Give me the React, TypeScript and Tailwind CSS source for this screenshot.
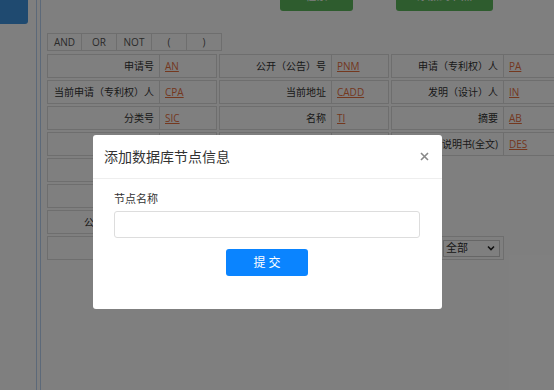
import React from 'react';

// 检索表单背后的页面 + 添加节点弹窗
type Pair = { label: string; code: string };

const rows: Pair[][] = [
  [
    { label: '申请号', code: 'AN' },
    { label: '公开（公告）号', code: 'PNM' },
    { label: '申请（专利权）人', code: 'PA' },
  ],
  [
    { label: '当前申请（专利权）人', code: 'CPA' },
    { label: '当前地址', code: 'CADD' },
    { label: '发明（设计）人', code: 'IN' },
  ],
  [
    { label: '分类号', code: 'SIC' },
    { label: '名称', code: 'TI' },
    { label: '摘要', code: 'AB' },
  ],
  [
    { label: '主分类号', code: 'PIC' },
    { label: '权利要求', code: 'CL' },
    { label: '说明书(全文)', code: 'DES' },
  ],
];

const dateRows = ['申请日', '优先权日', '公开（公告）日'];

const ops = ['AND', 'OR', 'NOT', '(', ')'];

const font = { fontFamily: '"Open Sans", "Noto Sans CJK SC", sans-serif' };

const PairCell: React.FC<{ pair: Pair }> = ({ pair }) => (
  <div className="flex">
    <div className="w-[113px] h-[24px] border border-[#dddddd] flex items-center justify-end pr-[5px] text-[10px] text-[#333]">
      {pair.label}
    </div>
    <div className="w-[57px] h-[24px] border border-l-0 border-[#dddddd] flex items-center pl-[5px] text-[10px]">
      <span className="text-[#e8703e] underline">{pair.code}</span>
    </div>
  </div>
);

const App: React.FC = () => {
  return (
    <div className="relative w-[554px] h-[390px] overflow-hidden bg-white" style={font}>
      <div className="flex h-full">
        {/* 左侧栏 */}
        <div className="w-[36px] shrink-0">
          <div className="w-[28px] h-[24px] bg-[#3e94e0] rounded-br-[3px]" />
        </div>
        <div className="w-[1px] bg-[#b8d2f2] shrink-0" />
        <div className="w-[3px] shrink-0" />
        <div className="w-[1px] bg-[#b8d2f2] shrink-0" />

        {/* 内容区 */}
        <div className="pl-[6px] w-[700px] shrink-0">
          <div className="flex h-[11px] pl-[233px] gap-[43px]">
            <div className="w-[73px] h-[30px] -mt-[19px] rounded-[3px] bg-[#5cb85c] text-white text-[11px] flex items-center justify-center">
              检索
            </div>
            <div className="w-[97px] h-[30px] -mt-[19px] rounded-[3px] bg-[#5cb85c] text-white text-[11px] flex items-center justify-center">
              添加到节点
            </div>
          </div>

          <div className="flex mt-[22px]">
            {ops.map((op, i) => (
              <div
                key={op}
                className={`w-[35px] h-[18px] border border-[#dddddd] ${i > 0 ? 'border-l-0' : ''} flex items-center justify-center text-[10px] text-[#555]`}
              >
                {op}
              </div>
            ))}
          </div>

          <div className="mt-[3px] flex flex-col gap-[2px]">
            {rows.map((r, i) => (
              <div key={i} className="flex gap-[2px]">
                {r.map((p) => (
                  <PairCell key={p.code} pair={p} />
                ))}
              </div>
            ))}
            {dateRows.map((label) => (
              <div key={label} className="flex">
                <div className="w-[113px] h-[24px] border border-[#dddddd] flex items-center justify-end pr-[5px] text-[10px] text-[#333]">
                  {label}
                </div>
                <div className="w-[270px] h-[24px] border border-l-0 border-[#dddddd]" />
              </div>
            ))}
            <div className="flex">
              <div className="w-[113px] h-[24px] border border-[#dddddd] flex items-center justify-end pr-[5px] text-[10px] text-[#333]">
                法律状态
              </div>
              <div className="w-[281px] h-[24px] border border-l-0 border-[#dddddd]" />
              <div className="w-[63px] h-[24px] border border-l-0 border-[#dddddd] flex items-center pl-[2px]">
                <div className="w-[57px] h-[17px] border border-[#cccccc] flex items-center justify-between pl-[2px] pr-[4px] text-[11px] text-[#333]">
                  <span>全部</span>
                  <svg width="8" height="6" viewBox="0 0 8 6">
                    <path d="M1 1.5 L4 4.5 L7 1.5" fill="none" stroke="#222" strokeWidth="1.6" />
                  </svg>
                </div>
              </div>
            </div>
          </div>
        </div>
      </div>

      {/* 遮罩 */}
      <div className="absolute inset-0 bg-black/50" />

      {/* 弹窗 */}
      <div className="absolute left-[93px] top-[135px] w-[349px] h-[174px] bg-white rounded-[3px]">
        <div className="h-[44px] flex items-center justify-between pl-[11px] pr-[13px] border-b border-[#eeeeee]">
          <span className="text-[14px] text-[#333]">添加数据库节点信息</span>
          <svg width="9" height="9" viewBox="0 0 9 9" className="mt-[-1px]">
            <path d="M1 1 L8 8 M8 1 L1 8" stroke="#888" strokeWidth="1.6" />
          </svg>
        </div>
        <div className="px-[21px] pt-[12px]">
          <div className="text-[11px] text-[#333] leading-[15px]">节点名称</div>
          <input
            type="text"
            className="mt-[5px] w-[306px] h-[27px] border border-[#dddddd] rounded-[3px] outline-none px-2 text-[11px]"
          />
          <div className="flex justify-center mt-[11px] pr-[1px]">
            <button className="w-[82px] h-[27px] rounded-[3px] bg-[#0a84ff] text-white text-[12px] tracking-[3px] pl-[3px]">
              提交
            </button>
          </div>
        </div>
      </div>
    </div>
  );
};

export default App;
